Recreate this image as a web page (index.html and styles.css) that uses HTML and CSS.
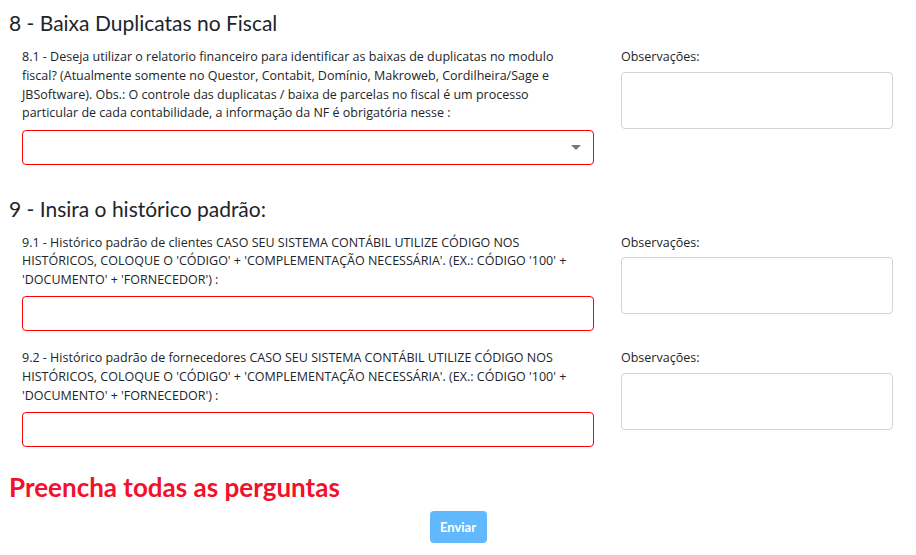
FILE: index.html
```html
<!DOCTYPE html>
<html lang="pt-BR">
<head>
    <meta charset="UTF-8">
    <meta name="viewport" content="width=device-width, initial-scale=1.0">
    <title>Questionário</title>
    <link rel="stylesheet" href="styles.css">
</head>
<body>
    <div class="page">
        <div class="section">
            <h2 class="title">8 - Baixa Duplicatas no Fiscal</h2>
            <div class="row">
                <div class="question">
                    <label for="q81">8.1 - Deseja utilizar o relatorio financeiro para identificar as baixas de duplicatas no modulo fiscal? (Atualmente somente no Questor, Contabit, Domínio, Makroweb, Cordilheira/Sage e JBSoftware). Obs.: O controle das duplicatas / baixa de parcelas no fiscal é um processo particular de cada contabilidade, a informação da NF é obrigatória nesse :</label>
                    <div class="select">
                        <select id="q81">
                            <option></option>
                            <option>Sim</option>
                            <option>Não</option>
                        </select>
                        <span class="caret"></span>
                    </div>
                </div>
                <div class="obs">
                    <label for="obs81">Observações:</label>
                    <textarea id="obs81"></textarea>
                </div>
            </div>
        </div>

        <div class="section">
            <h2 class="title">9 - Insira o histórico padrão:</h2>
            <div class="row">
                <div class="question">
                    <label for="q91">9.1 - Histórico padrão de clientes CASO SEU SISTEMA CONTÁBIL UTILIZE CÓDIGO NOS HISTÓRICOS, COLOQUE O 'CÓDIGO' + 'COMPLEMENTAÇÃO NECESSÁRIA'. (EX.: CÓDIGO '100' + 'DOCUMENTO' + 'FORNECEDOR') :</label>
                    <input type="text" id="q91">
                </div>
                <div class="obs">
                    <label for="obs91">Observações:</label>
                    <textarea id="obs91"></textarea>
                </div>
            </div>
            <div class="row">
                <div class="question">
                    <label for="q92">9.2 - Histórico padrão de fornecedores CASO SEU SISTEMA CONTÁBIL UTILIZE CÓDIGO NOS HISTÓRICOS, COLOQUE O 'CÓDIGO' + 'COMPLEMENTAÇÃO NECESSÁRIA'. (EX.: CÓDIGO '100' + 'DOCUMENTO' + 'FORNECEDOR') :</label>
                    <input type="text" id="q92">
                </div>
                <div class="obs">
                    <label for="obs92">Observações:</label>
                    <textarea id="obs92"></textarea>
                </div>
            </div>
        </div>

        <p class="warning">Preencha todas as perguntas</p>
        <div class="actions">
            <button type="button" class="btn" disabled>Enviar</button>
        </div>
    </div>
</body>
</html>
```

FILE: styles.css
```css
body {
    margin: 0;
    font-family: Lato, "Open Sans", sans-serif;
    color: #212529;
    background-color: #fff;
}
.page {
    padding: 9px 9px 0;
}
.section + .section {
    margin-top: 30px;
}
.title {
    margin: 0 0 10px;
    font-size: 21px;
    line-height: 28px;
    font-weight: 400;
}
.row {
    display: flex;
    margin-left: 13px;
}
.row + .row {
    margin-top: 17px;
}
.question {
    width: 572px;
}
.question label {
    padding-right: 12px;
}
.obs {
    width: 272px;
    margin-left: 27px;
}
.obs label {
    margin-bottom: 5px;
}
label {
    display: block;
    font-family: "Open Sans", sans-serif;
    font-size: 12.5px;
    line-height: 18.75px;
    padding-top: 1px;
    margin-bottom: 6.5px;
}
.select {
    position: relative;
    margin-top: 1px;
}
select, input[type="text"] {
    display: block;
    width: 100%;
    height: 35px;
    box-sizing: border-box;
    border: 1px solid #ff0000;
    border-radius: 4px;
    background: #fff;
    font: inherit;
    font-size: 13px;
    padding: 0 10px;
    -webkit-appearance: none;
    appearance: none;
}
.caret {
    position: absolute;
    right: 13px;
    top: 15px;
    width: 0;
    height: 0;
    border-left: 5px solid transparent;
    border-right: 5px solid transparent;
    border-top: 5px solid #777;
    pointer-events: none;
}
textarea {
    display: block;
    width: 100%;
    height: 57px;
    box-sizing: border-box;
    border: 1px solid #ced4da;
    border-radius: 4px;
    resize: none;
    font: inherit;
}
.warning {
    margin: 24px 0 0;
    font-size: 26px;
    line-height: 32px;
    font-weight: 700;
    color: #f2102a;
}
.actions {
    display: flex;
    justify-content: center;
    margin-top: 8px;
}
.btn {
    width: 57px;
    height: 32px;
    border: none;
    border-radius: 4px;
    background-color: #61b8fc;
    color: #fff;
    font: inherit;
    font-size: 13px;
    font-weight: 700;
}
```
